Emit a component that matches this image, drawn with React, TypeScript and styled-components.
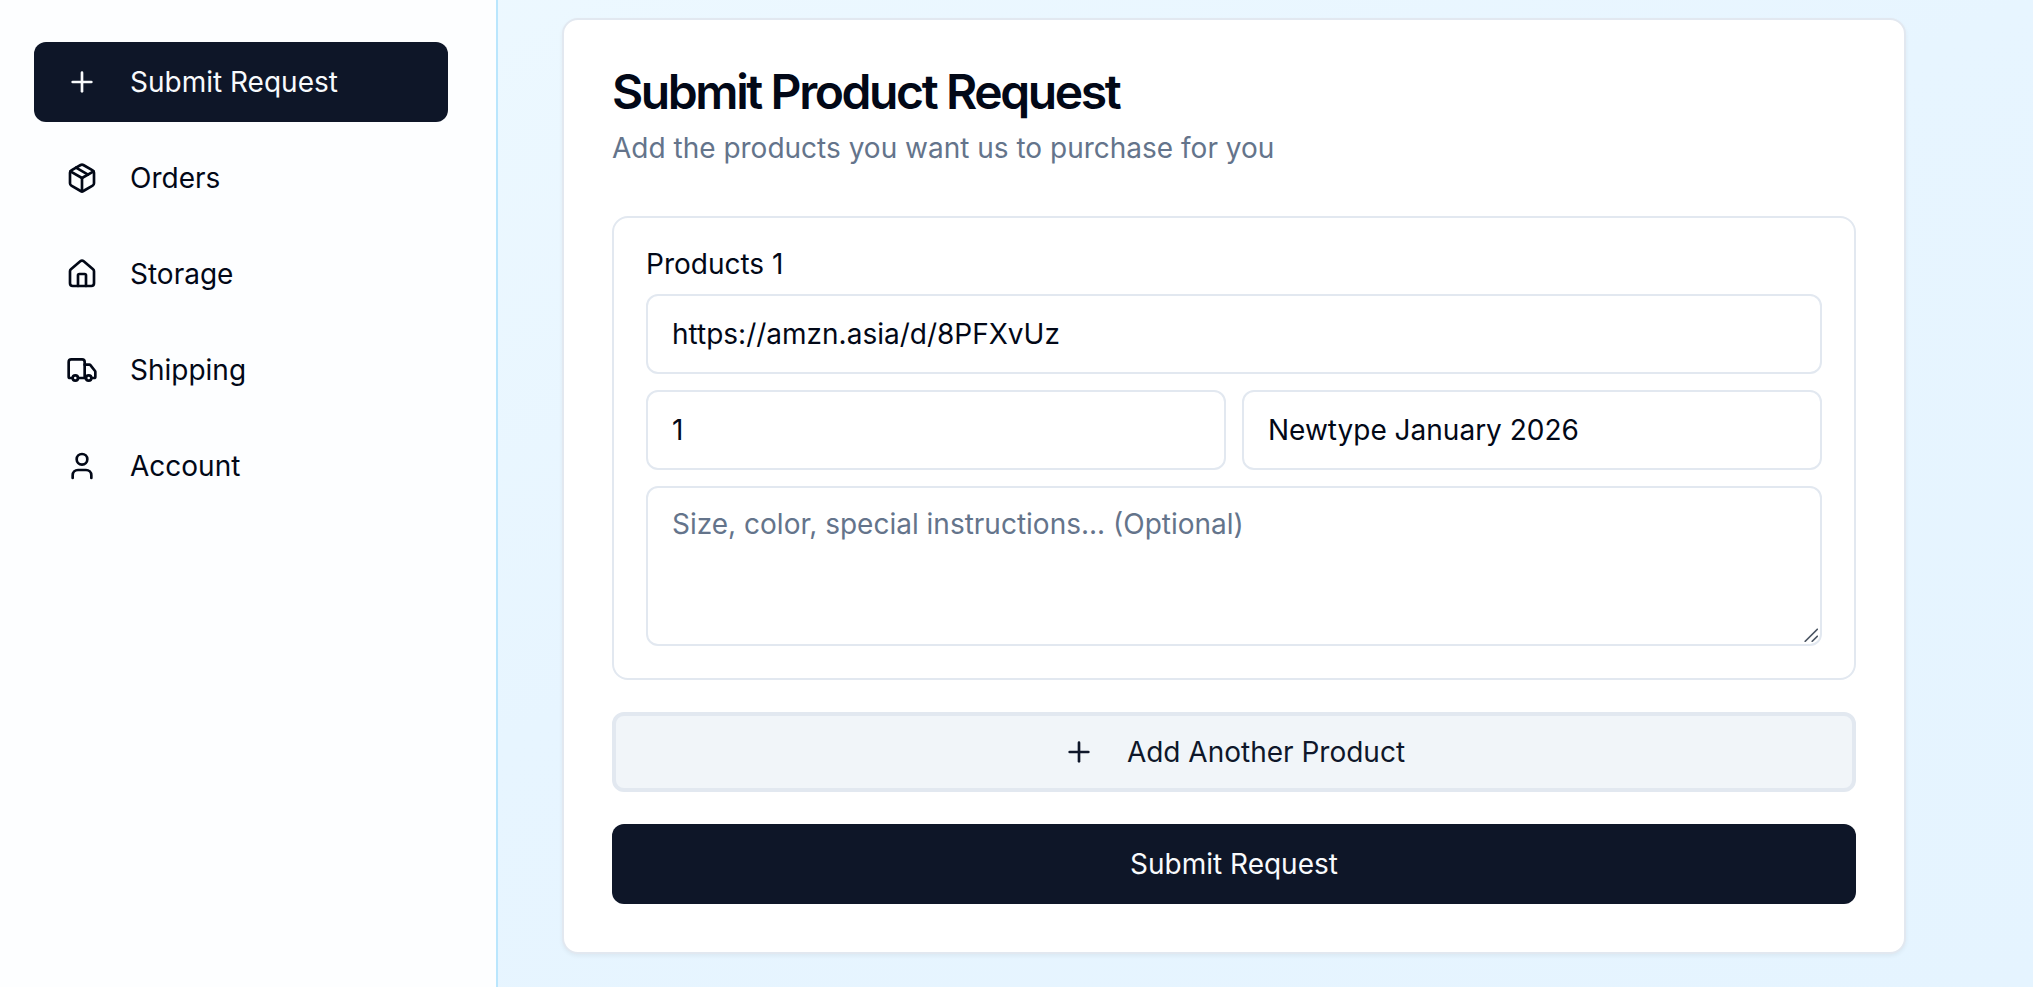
import React from "react";
import styled, { createGlobalStyle } from "styled-components";
import { House, Package, Plus, Truck, User } from "lucide-react";

const GlobalStyle = createGlobalStyle`
  *, *::before, *::after {
    box-sizing: border-box;
  }

  body {
    margin: 0;
    font-family: Inter, "Liberation Sans", sans-serif;
    font-size: 28px;
    line-height: 40px;
    color: #020817;
    -webkit-font-smoothing: antialiased;
  }

  button, input, textarea {
    margin: 0;
    font: inherit;
    color: inherit;
  }
`;

const Page = styled.div`
  display: flex;
  min-height: 100vh;
  background: linear-gradient(to bottom right, #eef9ff, #e7f5ff 50%, #e5f4ff);
`;

const Sidebar = styled.aside`
  flex: 0 0 498px;
  padding: 42px 48px 32px 34px;
  background: #fdfeff;
  border-right: 2px solid #bae6fd;
`;

const NavList = styled.nav`
  display: flex;
  flex-direction: column;
  gap: 16px;
`;

const NavButton = styled.button<{ $active?: boolean }>`
  display: flex;
  align-items: center;
  gap: 32px;
  height: 80px;
  padding: 0 32px;
  border: 0;
  border-radius: 12px;
  background: ${(p) => (p.$active ? "#0e1628" : "transparent")};
  color: ${(p) => (p.$active ? "#f8fafc" : "#020817")};
  cursor: pointer;
`;

const Main = styled.main`
  flex: 1;
  min-width: 0;
  padding: 18px 64px 32px;
`;

const Card = styled.section`
  max-width: 1344px;
  padding: 48px;
  border: 2px solid #e2e8f0;
  border-radius: 16px;
  background: #ffffff;
  box-shadow: 0 2px 4px rgba(0, 0, 0, 0.05);
`;

const CardHeader = styled.header`
  display: flex;
  flex-direction: column;
  gap: 12px;
  margin-bottom: 48px;
`;

const Title = styled.h1`
  margin: 0;
  font-size: 48px;
  font-weight: 600;
  line-height: 48px;
  letter-spacing: -0.05em;
`;

const Description = styled.p`
  margin: 0;
  color: #64748b;
`;

const Form = styled.form`
  display: flex;
  flex-direction: column;
  gap: 32px;
`;

const ProductBox = styled.div`
  display: flex;
  flex-direction: column;
  gap: 16px;
  padding: 32px;
  border: 2px solid #e2e8f0;
  border-radius: 16px;
`;

const FieldLabel = styled.label`
  line-height: 28px;
`;

const FieldRow = styled.div`
  display: grid;
  grid-template-columns: 1fr 1fr;
  gap: 16px;
`;

const TextInput = styled.input`
  width: 100%;
  height: 80px;
  padding: 0 24px;
  border: 2px solid #e2e8f0;
  border-radius: 12px;
  background: #ffffff;
  outline: none;
  appearance: textfield;

  &::-webkit-inner-spin-button {
    appearance: none;
  }
`;

const NotesWrap = styled.div`
  position: relative;
  display: flex;
`;

const Notes = styled.textarea`
  width: 100%;
  height: 160px;
  padding: 16px 24px;
  border: 2px solid #e2e8f0;
  border-radius: 12px;
  background: #ffffff;
  outline: none;
  resize: vertical;

  &::placeholder {
    color: #64748b;
    opacity: 1;
  }

  &::-webkit-resizer {
    background: transparent;
  }
`;

const Grip = styled.svg`
  position: absolute;
  right: 4px;
  bottom: 4px;
  pointer-events: none;
`;

const ActionButton = styled.button<{ $primary?: boolean }>`
  display: flex;
  align-items: center;
  justify-content: center;
  gap: 32px;
  height: 80px;
  padding: 0 32px;
  border: ${(p) => (p.$primary ? "0" : "4px solid #e2e8f0")};
  border-radius: 12px;
  background: ${(p) => (p.$primary ? "#0e1628" : "#f1f5f9")};
  color: ${(p) => (p.$primary ? "#f8fafc" : "#0f172a")};
  cursor: pointer;
`;

const navItems = [
  { label: "Submit Request", icon: Plus },
  { label: "Orders", icon: Package },
  { label: "Storage", icon: House },
  { label: "Shipping", icon: Truck },
  { label: "Account", icon: User },
];

export default function App() {
  return (
    <>
      <GlobalStyle />
      <Page>
        <Sidebar>
          <NavList>
            {navItems.map(({ label, icon: Icon }, i) => (
              <NavButton key={label} type="button" $active={i === 0}>
                <Icon size={32} />
                {label}
              </NavButton>
            ))}
          </NavList>
        </Sidebar>
        <Main>
          <Card>
            <CardHeader>
              <Title>Submit Product Request</Title>
              <Description>Add the products you want us to purchase for you</Description>
            </CardHeader>
            <Form onSubmit={(e) => e.preventDefault()}>
              <ProductBox>
                <FieldLabel htmlFor="product-url">Products 1</FieldLabel>
                <TextInput id="product-url" type="url" defaultValue="https://amzn.asia/d/8PFXvUz" />
                <FieldRow>
                  <TextInput type="number" min={1} defaultValue={1} aria-label="Quantity" />
                  <TextInput type="text" defaultValue="Newtype January 2026" aria-label="Product name" />
                </FieldRow>
                <NotesWrap>
                  <Notes
                    aria-label="Notes"
                    placeholder="Size, color, special instructions... (Optional)"
                  />
                  <Grip width="14" height="14" viewBox="0 0 14 14" fill="none" stroke="#4b5563" strokeWidth="1.6" aria-hidden="true">
                    <path d="M0.7 13.8 13.8 0.7M7.7 13.8l6.1-6.1" />
                  </Grip>
                </NotesWrap>
              </ProductBox>
              <ActionButton type="button">
                <Plus size={32} />
                Add Another Product
              </ActionButton>
              <ActionButton type="submit" $primary>
                Submit Request
              </ActionButton>
            </Form>
          </Card>
        </Main>
      </Page>
    </>
  );
}
